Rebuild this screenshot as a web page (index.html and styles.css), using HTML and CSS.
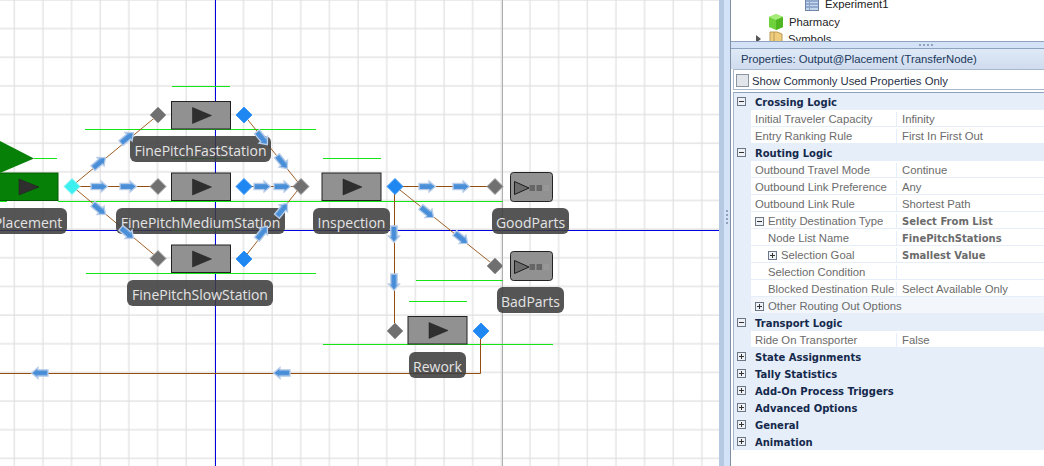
FILE: index.html
```html
<!DOCTYPE html>
<html>
<head>
    <title>Facility view</title>
    <link rel="stylesheet" href="styles.css">
</head>
<body>
    <div id="facility">
        <svg class="canvas" width="719" height="466" viewBox="0 0 719 466">
            <defs>
                <pattern id="grid" width="28.65" height="28.65" patternUnits="userSpaceOnUse" x="0.3" y="-14">
                    <path class="grid-line" d="M14 0V28.65M0 14H28.65"/>
                </pattern>
                <linearGradient id="arrowFill" x1="0" y1="0" x2="0" y2="1">
                    <stop offset="0" stop-color="#8fbeec"/>
                    <stop offset="0.45" stop-color="#468cd6"/>
                    <stop offset="1" stop-color="#5597dc"/>
                </linearGradient>
                <path id="arrow" class="arrow" d="M-8-3.2H2V-5.5L8.5 0L2 5.5V3.2H-8Z"/>
                <polygon id="diamond" points="0,-8 8,0 0,8 -8,0"/>
                <g id="server">
                    <rect class="server-box" width="59" height="27.5"/>
                    <path class="server-mark" d="M21 6V22L40 14Z"/>
                </g>
                <g id="sink">
                    <rect class="server-box" width="42" height="29" rx="3"/>
                    <path class="sink-mark" d="M4 9V22L18.5 15.5Z"/>
                    <rect class="sink-dot" x="19" y="12.5" width="5.5" height="6"/>
                    <rect class="sink-dot" x="26" y="12.5" width="5.5" height="6"/>
                    <rect class="sink-dot faded" x="33" y="12.5" width="5.5" height="6"/>
                </g>
            </defs>

            <rect width="719" height="466" fill="#fff"/>
            <rect width="719" height="466" fill="url(#grid)"/>
            <path class="axis" d="M215.5 0V466M0 230.5H719"/>
            <path class="axis-gray" d="M502.5 0V466"/>

            <!-- queue lines -->
            <path class="queue" d="M172 86.5H230M85 129.5H316M172 158.5H230M34 158.5H57M0 201.5H7M58 201.5H316M172 230.5H230M86 273.5H316M323 158.5H381M310 201.5H503M416 280.5H503M409 301.5H467M323 344.5H553"/>

            <!-- links -->
            <path class="link thin" d="M72 186L158 115M72 186L158 258M244 115L301 186M244 258L301 186M395 186L495 266"/>
            <path class="link" d="M72 186.5H158M244 186.5H301M395 186.5H495M394.5 186V331M480.5 331V373.5H0"/>

            <!-- objects -->
            <use href="#server" x="171.5" y="101.5"/>
            <use href="#server" x="171.5" y="173"/>
            <use href="#server" x="171.5" y="245"/>
            <use href="#server" x="322" y="173"/>
            <use href="#server" x="408" y="316.5"/>
            <use href="#sink" x="510.5" y="172.5"/>
            <use href="#sink" x="510.5" y="251.5"/>

            <rect class="source-box" x="-4" y="173" width="62" height="27.5"/>
            <path class="server-mark" d="M19 179V195L39 187Z"/>
            <path class="source-flag" d="M0 141L34 158.5L0 173Z"/>

            <use class="node" href="#diamond" x="158" y="115"/>
            <use class="node" href="#diamond" x="158" y="186.5"/>
            <use class="node" href="#diamond" x="158" y="258.5"/>
            <use class="node" href="#diamond" x="301" y="186.5"/>
            <use class="node" href="#diamond" x="495" y="186.5"/>
            <use class="node" href="#diamond" x="495" y="266"/>
            <use class="node" href="#diamond" x="395" y="331"/>
            <use class="node out" href="#diamond" x="244" y="115"/>
            <use class="node out" href="#diamond" x="244" y="186.5"/>
            <use class="node out" href="#diamond" x="244" y="259"/>
            <use class="node out" href="#diamond" x="395" y="186.5"/>
            <use class="node out" href="#diamond" x="481" y="331"/>
            <use class="node start" href="#diamond" x="72" y="186.5"/>

            <!-- labels -->
            <rect class="tag" x="130" y="136" width="141" height="26" rx="6"/>
            <text class="tag-text" x="200.5" y="156">FinePitchFastStation</text>
            <rect class="tag" x="116" y="208" width="169" height="26" rx="6"/>
            <text class="tag-text" x="200.5" y="228">FinePitchMediumStation</text>
            <rect class="tag" x="127" y="280" width="146" height="26" rx="6"/>
            <text class="tag-text" x="200" y="300">FinePitchSlowStation</text>
            <rect class="tag" x="-20" y="208" width="87" height="26" rx="6"/>
            <text class="tag-text" x="28" y="228">Placement</text>
            <rect class="tag" x="313" y="208" width="77" height="26" rx="6"/>
            <text class="tag-text" x="351.5" y="228">Inspection</text>
            <rect class="tag" x="492" y="208" width="77" height="26" rx="6"/>
            <text class="tag-text" x="530.5" y="228">GoodParts</text>
            <rect class="tag" x="497" y="287" width="67" height="26" rx="6"/>
            <text class="tag-text" x="530.5" y="307">BadParts</text>
            <rect class="tag" x="409" y="352" width="57" height="26" rx="6"/>
            <text class="tag-text" x="437.5" y="372">Rework</text>

            <!-- direction arrows -->
            <use href="#arrow" transform="translate(99 163) rotate(-40)"/>
            <use href="#arrow" transform="translate(127 138) rotate(-40)"/>
            <use href="#arrow" transform="translate(99 186.5)"/>
            <use href="#arrow" transform="translate(128 186.5)"/>
            <use href="#arrow" transform="translate(99 209) rotate(40)"/>
            <use href="#arrow" transform="translate(127 233) rotate(40)"/>
            <use href="#arrow" transform="translate(262 138) rotate(51)"/>
            <use href="#arrow" transform="translate(282 162) rotate(51)"/>
            <use href="#arrow" transform="translate(262 186.5)"/>
            <use href="#arrow" transform="translate(282 186.5)"/>
            <use href="#arrow" transform="translate(282 210) rotate(-51)"/>
            <use href="#arrow" transform="translate(262 233) rotate(-51)"/>
            <use href="#arrow" transform="translate(427 186.5)"/>
            <use href="#arrow" transform="translate(461 186.5)"/>
            <use href="#arrow" transform="translate(427 212) rotate(39)"/>
            <use href="#arrow" transform="translate(461 238) rotate(39)"/>
            <use href="#arrow" transform="translate(394 234) rotate(90)"/>
            <use href="#arrow" transform="translate(394 282) rotate(90)"/>
            <use href="#arrow" transform="translate(40 373) rotate(180)"/>
            <use href="#arrow" transform="translate(282 373) rotate(180)"/>
        </svg>
    </div>

    <div id="splitter"><span class="grip vertical"></span></div>

    <div id="sidebar">
        <div id="tree">
            <div class="tree-list">
                <div class="tree-row level3">
                    <svg class="tree-icon" width="16" height="16" viewBox="0 0 16 16">
                        <rect x="1.5" y="1.5" width="13" height="13" fill="#c6d6ec" stroke="#6f86a8"/>
                        <path d="M2 5H14M2 8H14M2 11H14" stroke="#5f7fb0"/>
                        <path d="M5.5 2V14" stroke="#8ea4c4"/>
                    </svg>
                    Experiment1
                </div>
                <div class="tree-row level2">
                    <svg class="tree-icon" width="16" height="18" viewBox="0 0 16 18">
                        <path d="M8 1L15 4V14L8 17L1 14V4Z" fill="#6fd13c"/>
                        <path d="M8 1L15 4L8 7L1 4Z" fill="#a6ec78"/>
                        <path d="M8 7L15 4V14L8 17Z" fill="#4fb522"/>
                    </svg>
                    Pharmacy
                </div>
                <div class="tree-row level1">
                    <svg class="tree-caret" width="8" height="8" viewBox="0 0 8 8"><path d="M1 0L6 4L1 8Z" fill="#555"/></svg>
                    <svg class="tree-icon" width="14" height="16" viewBox="0 0 14 16">
                        <path d="M1 1H8L13 3V15H1Z" fill="#f0cd7c" stroke="#b99a55"/>
                        <path d="M5 1V12" stroke="#b99a55"/>
                    </svg>
                    Symbols
                </div>
            </div>
        </div>
        <div id="hsplit"><span class="grip"></span></div>
        <div id="props">
            <div class="props-title">Properties: Output@Placement (TransferNode)</div>
            <div class="props-check">
                <span class="checkbox"></span>
                Show Commonly Used Properties Only
            </div>
            <div class="grid">
                <div class="group"><span class="box minus"></span>Crossing Logic</div>
                <div class="row"><div class="name">Initial Traveler Capacity</div><div class="value">Infinity</div></div>
                <div class="row"><div class="name">Entry Ranking Rule</div><div class="value">First In First Out</div></div>

                <div class="group"><span class="box minus"></span>Routing Logic</div>
                <div class="row"><div class="name">Outbound Travel Mode</div><div class="value">Continue</div></div>
                <div class="row"><div class="name">Outbound Link Preference</div><div class="value">Any</div></div>
                <div class="row"><div class="name">Outbound Link Rule</div><div class="value">Shortest Path</div></div>
                <div class="row"><div class="name"><span class="box minus"></span>Entity Destination Type</div><div class="value set">Select From List</div></div>
                <div class="row"><div class="name indent">Node List Name</div><div class="value set">FinePitchStations</div></div>
                <div class="row"><div class="name indent"><span class="box plus"></span>Selection Goal</div><div class="value set">Smallest Value</div></div>
                <div class="row"><div class="name indent">Selection Condition</div><div class="value"></div></div>
                <div class="row"><div class="name indent">Blocked Destination Rule</div><div class="value">Select Available Only</div></div>
                <div class="row folded"><div class="name"><span class="box plus"></span>Other Routing Out Options</div></div>

                <div class="group"><span class="box minus"></span>Transport Logic</div>
                <div class="row"><div class="name">Ride On Transporter</div><div class="value">False</div></div>

                <div class="group"><span class="box plus"></span>State Assignments</div>
                <div class="group"><span class="box plus"></span>Tally Statistics</div>
                <div class="group"><span class="box plus"></span>Add-On Process Triggers</div>
                <div class="group"><span class="box plus"></span>Advanced Options</div>
                <div class="group"><span class="box plus"></span>General</div>
                <div class="group"><span class="box plus"></span>Animation</div>
            </div>
        </div>
    </div>
</body>
</html>
```

FILE: styles.css
```css
body {
    margin: 0;
    width: 1044px;
    height: 466px;
    display: flex;
    overflow: hidden;
    background-color: #fff;
    font-family: "Liberation Sans", Arial, sans-serif;
    font-size: 11.3px;
    white-space: nowrap;
}

#facility {
    width: 719px;
    flex: none;
    overflow: hidden;
}

.canvas {
    display: block;
}

.grid-line {
    fill: none;
    stroke: #e0e0e0;
    stroke-width: 1.2;
}

.axis {
    fill: none;
    stroke: #0000e0;
    stroke-width: 1;
}

.axis-gray {
    stroke: #aeaeae;
    stroke-width: 1;
}

.queue {
    fill: none;
    stroke: #14e614;
    stroke-width: 1;
}

.link {
    fill: none;
    stroke: #954d0f;
    stroke-width: 1;
}

.link.thin {
    stroke-width: 0.9;
}

.server-box {
    fill: #919191;
    stroke: #222;
    stroke-width: 1;
}

.server-mark {
    fill: #2f2f2f;
    stroke: #1c1c1c;
    stroke-width: 0.5;
}

.source-box {
    fill: #078007;
    stroke: #045a04;
}

.source-flag {
    fill: #078007;
}

.sink-mark {
    fill: #6c6c6c;
    stroke: #1c1c1c;
}

.sink-dot {
    fill: #666;
}

.sink-dot.faded {
    fill: #979797;
}

.node {
    fill: #707070;
    stroke: #a0a0a0;
    stroke-width: 1;
}

.node.out {
    fill: #1f87f2;
    stroke: #3b97f5;
}

.node.start {
    fill: #3cf0f0;
    stroke: #8ef5f5;
}

.tag {
    fill: #3e3e3e;
    opacity: 0.88;
}

.tag-text {
    fill: #e4e4e4;
    font-family: "Open Sans", sans-serif;
    font-size: 14px;
    text-anchor: middle;
}

.arrow {
    fill: url(#arrowFill);
    stroke: #b9cde8;
    stroke-width: 1.3;
}

#splitter {
    width: 12px;
    flex: none;
    box-sizing: border-box;
    background: linear-gradient(90deg, #b6c9e3 5px, #d3e2f6 5px);
    border-right: 1px solid #7f8fa3;
    padding: 210px 0 0 7px;
}

.grip {
    display: block;
    width: 15px;
    height: 2px;
    background-image: linear-gradient(90deg, #8fa3bd 2px, transparent 2px);
    background-size: 4px 2px;
}

.grip.vertical {
    width: 2px;
    height: 15px;
    background-image: linear-gradient(#8fa3bd 2px, transparent 2px);
    background-size: 2px 4px;
}

#sidebar {
    flex: 1;
    min-width: 0;
    display: flex;
    flex-direction: column;
    background-color: #d3e2f6;
}

#tree {
    height: 41px;
    flex: none;
    overflow: hidden;
    background-color: #fff;
    border-bottom: 1px solid #8ea3bf;
    color: #1d1d1d;
}

.tree-list {
    margin-top: -5px;
}

.tree-row {
    height: 18px;
    display: flex;
    align-items: center;
    gap: 5px;
}

.tree-row.level3 {
    padding-left: 73px;
}

.tree-row.level2 {
    padding-left: 37px;
}

.tree-row.level1 {
    padding-left: 24px;
    margin-top: -1px;
}

.tree-caret {
    margin-right: 1px;
}

#hsplit {
    height: 6px;
    flex: none;
    display: flex;
    align-items: center;
    padding-left: 188px;
}

#props {
    flex: 1;
    display: flex;
    flex-direction: column;
    border-top: 1px solid #8ea3bf;
    min-height: 0;
    background-color: #fff;
}

.props-title {
    height: 20px;
    flex: none;
    padding-left: 10px;
    line-height: 20px;
    color: #20385c;
    background: linear-gradient(#dfe9f6, #cfdcee);
}

.props-check {
    height: 21px;
    flex: none;
    display: flex;
    align-items: center;
    gap: 3px;
    padding: 2px 0 0 2px;
    border: 1px solid #a9b8cc;
    border-right: none;
    box-sizing: border-box;
    margin-left: 2px;
    color: #1f2f45;
}

.checkbox {
    width: 11px;
    height: 11px;
    border: 1px solid #8a94a2;
    background-color: #e2e6eb;
}

.grid {
    margin: 2px 0 0 2px;
    border-top: 1px solid #8ea3bf;
    border-left: 1px solid #a9b8cc;
    background: linear-gradient(90deg, #e6eff9 17px, transparent 17px);
}

.group {
    height: 17px;
    box-sizing: border-box;
    display: flex;
    align-items: center;
    padding: 2px 0 0 3px;
    background-color: #e6eff9;
    font-family: "DejaVu Sans", sans-serif;
    font-size: 10px;
    font-weight: bold;
    color: #14284c;
}

.group .box {
    margin: -2px 9px 0 0;
}

.row {
    height: 17px;
    display: flex;
    margin-left: 17px;
    box-sizing: border-box;
    padding-top: 2px;
    border-bottom: 1px solid #e6eff9;
    color: #6b6b6b;
    background-color: #fff;
}

.row.folded {
    background-color: #f3f7fc;
}

.name {
    width: 146px;
    flex: none;
    box-sizing: border-box;
    padding-left: 4px;
    display: flex;
    align-items: center;
    border-right: 1px solid #e6eff9;
}

.name .box {
    margin-right: 4px;
}

.name.indent {
    padding-left: 17px;
}

.row.folded .name {
    width: auto;
    border-right: none;
}

.value {
    flex: 1;
    padding-left: 5px;
    display: flex;
    align-items: center;
}

.value.set {
    font-family: "DejaVu Sans", sans-serif;
    font-size: 10px;
    font-weight: bold;
}

.box {
    width: 7px;
    height: 7px;
    flex: none;
    border: 1px solid #6d7684;
    background-color: #eef2f7;
    position: relative;
}

.box::before {
    content: "";
    position: absolute;
    left: 1px;
    top: 3px;
    width: 5px;
    height: 1px;
    background-color: #333;
}

.box.plus::after {
    content: "";
    position: absolute;
    left: 3px;
    top: 1px;
    width: 1px;
    height: 5px;
    background-color: #333;
}
```
